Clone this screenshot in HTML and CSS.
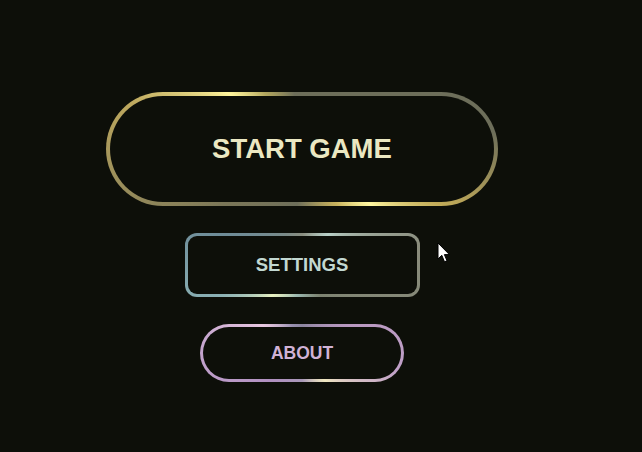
FILE: index.html
```html
<!DOCTYPE html>
<html>
<head>
<meta charset="utf-8">
<link rel="stylesheet" href="styles.css">
</head>
<body>
<div class="menu">
  <button class="btn btn-start">START GAME</button>
  <button class="btn btn-settings">SETTINGS</button>
  <button class="btn btn-about">ABOUT</button>
</div>
<svg class="cursor" width="14" height="22" viewBox="0 0 14 22">
  <path d="M1 1 L1 17 L4.8 13.3 L7.5 19.8 L10 18.8 L7.4 12.6 L12.4 12.6 Z" fill="#fff" stroke="#000" stroke-width="1"/>
</svg>
</body>
</html>
```

FILE: styles.css
```css
html, body {
  margin: 0;
  padding: 0;
  background: #0d0f09;
  width: 642px;
  height: 452px;
  overflow: hidden;
  position: relative;
}
.menu {
  width: 604px;
  padding-top: 92px;
  display: flex;
  flex-direction: column;
  align-items: center;
  gap: 27px;
}
.btn {
  font-family: "Liberation Sans", Arial, sans-serif;
  font-weight: bold;
  border: 4px solid transparent;
  cursor: pointer;
  padding: 0;
}
.btn-start {
  width: 392px;
  height: 114px;
  border-radius: 57px;
  font-size: 27.5px;
  color: #ebe8c2;
  background:
    linear-gradient(#0d0f09, #0d0f09) padding-box,
    conic-gradient(from 0deg, #6d6e5a 0deg, #6d6e5a 85deg, #c2ab58 112deg, #fff7a0 129deg, #c8b25c 148deg, #6d6e5a 185deg, #7a7658 235deg, #bda85e 285deg, #fff59c 307deg, #b3a75e 326deg, #6d6e5a 352deg) border-box;
}
.btn-settings {
  width: 235px;
  height: 64px;
  border-radius: 12px;
  border-width: 3px;
  font-size: 18.5px;
  color: #c2d8d2;
  background:
    linear-gradient(#0d0f09, #0d0f09) padding-box,
    conic-gradient(from 0deg, #8a8e80 0deg, #b8d0c8 40deg, #8a8c7c 80deg, #7c8270 150deg, #9ab8b0 190deg, #e8f0c0 225deg, #8ab0b4 250deg, #6e8c98 290deg, #7a8a88 330deg, #8a8e80 360deg) border-box;
}
.btn-about {
  width: 204px;
  height: 58px;
  border-radius: 29px;
  border-width: 3px;
  font-size: 17.5px;
  color: #d0b2d6;
  background:
    linear-gradient(#0d0f09, #0d0f09) padding-box,
    conic-gradient(from 0deg, #8c86a0 0deg, #b898c0 60deg, #c0a0c8 100deg, #f0e8c0 140deg, #a898b8 180deg, #b090c0 230deg, #c8a8d0 280deg, #e8c8e0 305deg, #9890b0 340deg, #8c86a0 360deg) border-box;
}
.cursor {
  position: absolute;
  left: 437px;
  top: 242px;
}
```
